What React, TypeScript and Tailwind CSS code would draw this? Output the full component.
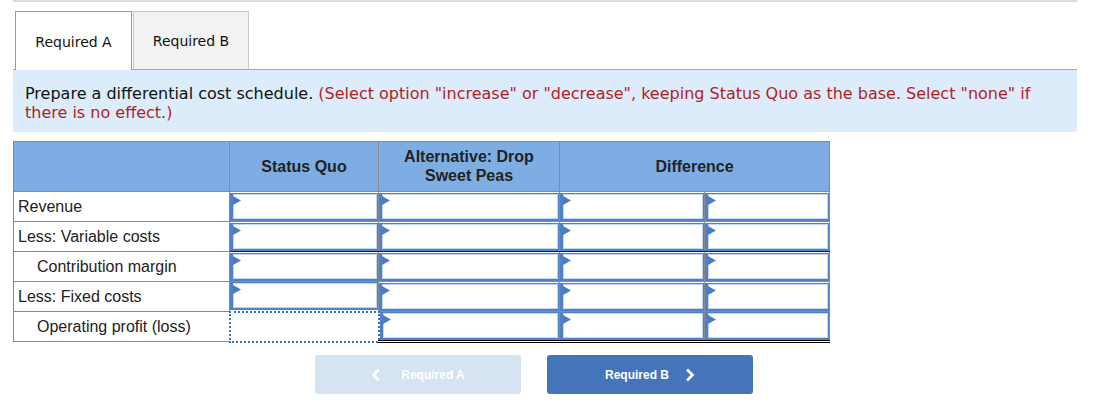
import React from "react";

const Tri = () => (
  <svg
    className="absolute left-0 top-[2px]"
    width="8"
    height="9"
    viewBox="0 0 8 9"
  >
    <polygon points="0,0 8,4.5 0,9" fill="#4a7cc4" />
  </svg>
);

type CellProps = { bottom?: "none" | "dark" | "double" };

const InputCell = ({ bottom = "none" }: CellProps) => {
  const b =
    bottom === "dark"
      ? "border-b border-b-[#10204a]"
      : bottom === "double"
      ? "border-b-[3px] border-double border-b-black"
      : "";
  return (
    <td className={`p-0 h-[30px] border border-[#8a8a8a] ${b}`}>
      <div className="relative h-[28px] bg-white border-l-[3px] border-r border-b-[2px] border-t border-[#4f80c8] shadow-[inset_0_0_0_1px_#c4d8f2]">
        <Tri />
      </div>
    </td>
  );
};

const LabelCell = ({ text, indent }: { text: string; indent?: boolean }) => (
  <td
    className={`h-[30px] border border-[#8a8a8a] text-[16px] text-[#222] leading-none ${
      indent ? "pl-[23px]" : "pl-[4px]"
    }`}
  >
    {text}
  </td>
);

export default function App() {
  const rows: { label: string; indent?: boolean; bottom?: "none" | "dark" | "double" }[] = [
    { label: "Revenue" },
    { label: "Less: Variable costs", bottom: "dark" },
    { label: "Contribution margin", indent: true },
    { label: "Less: Fixed costs", bottom: "dark" },
    { label: "Operating profit (loss)", indent: true, bottom: "double" },
  ];

  return (
    <div className="w-[1101px] h-[412px] bg-white">
      <div className="ml-[13px] w-[1064px]">
        <div className="h-[2px] bg-[#dddddd]" />
        {/* Tabs */}
        <div className="mt-[9px] flex items-end">
          <div className="ml-[2px] w-[117px] h-[59px] border border-b-0 border-[#9a9a9a] bg-white flex items-center justify-center pt-[2px] text-[14px] text-[#111] font-['DejaVu_Sans',sans-serif] -mb-px relative z-10">
            Required A
          </div>
          <div className="ml-[1px] w-[116px] h-[58px] border border-b-0 border-[#c8c8c8] bg-[#f2f2f2] flex items-center justify-center pt-[2px] text-[14px] text-[#111] font-['DejaVu_Sans',sans-serif]">
            Required B
          </div>
          <div className="flex-1" />
        </div>
        <div className="h-px bg-[#a8a8a8]" />
        {/* Instruction panel */}
        <div className="h-[62px] bg-[#dcecfa] pl-[12px] pt-[14px] font-['DejaVu_Sans',sans-serif] text-[16px] leading-[19px] text-[#111]">
          <div className="whitespace-nowrap">
            Prepare a differential cost schedule.{" "}
            <span className="text-[#b11e1e]">
              (Select option "increase" or "decrease", keeping Status Quo as the base. Select "none" if
            </span>
          </div>
          <div className="text-[#b11e1e]">there is no effect.)</div>
        </div>
        {/* Table */}
        <table className="mt-[9px] border-collapse font-['Liberation_Sans',Arial,sans-serif] table-fixed w-[816px]">
          <colgroup>
            <col className="w-[216px]" />
            <col className="w-[149px]" />
            <col className="w-[181px]" />
            <col className="w-[145px]" />
            <col className="w-[125px]" />
          </colgroup>
          <thead>
            <tr className="bg-[#7eade3] h-[50px]">
              <th className="border border-[#8a8a8a]" />
              <th className="border border-[#8a8a8a] text-[16px] font-bold text-[#222] leading-[19px]">
                Status Quo
              </th>
              <th className="border border-[#8a8a8a] text-[16px] font-bold text-[#222] leading-[19px] pb-[2px]">
                Alternative: Drop
                <br />
                Sweet Peas
              </th>
              <th
                colSpan={2}
                className="border border-[#8a8a8a] text-[16px] font-bold text-[#222] leading-[19px]"
              >
                Difference
              </th>
            </tr>
          </thead>
          <tbody>
            {rows.map((r, i) => (
              <tr key={i}>
                <LabelCell text={r.label} indent={r.indent} />
                {i === 4 ? (
                  <td className="p-0 h-[30px] border-2 border-dotted border-[#3a6fc0]" />
                ) : (
                  <InputCell bottom={i === 3 ? "none" : r.bottom} />
                )}
                <InputCell bottom={r.bottom} />
                <InputCell bottom={r.bottom} />
                <InputCell bottom={r.bottom} />
              </tr>
            ))}
          </tbody>
        </table>
        {/* Buttons */}
        <div className="mt-[12px] ml-[302px] flex gap-[26px] font-['Liberation_Sans',Arial,sans-serif]">
          <div className="w-[206px] h-[39px] rounded-[3px] bg-[#d6e3f1] flex items-center justify-center gap-[16px] text-white text-[12px] font-bold">
            <svg width="10" height="14" viewBox="0 0 10 14">
              <path d="M8 1.5 L2.5 7 L8 12.5" stroke="white" strokeWidth="2.6" fill="none" />
            </svg>
            <span className="ml-[4px]">Required A</span>
          </div>
          <div className="w-[206px] h-[39px] rounded-[3px] bg-[#4475bb] flex items-center justify-center gap-[16px] text-white text-[12px] font-bold">
            <span>Required B</span>
            <svg width="10" height="14" viewBox="0 0 10 14">
              <path d="M2 1.5 L7.5 7 L2 12.5" stroke="white" strokeWidth="2.6" fill="none" />
            </svg>
          </div>
        </div>
      </div>
    </div>
  );
}
